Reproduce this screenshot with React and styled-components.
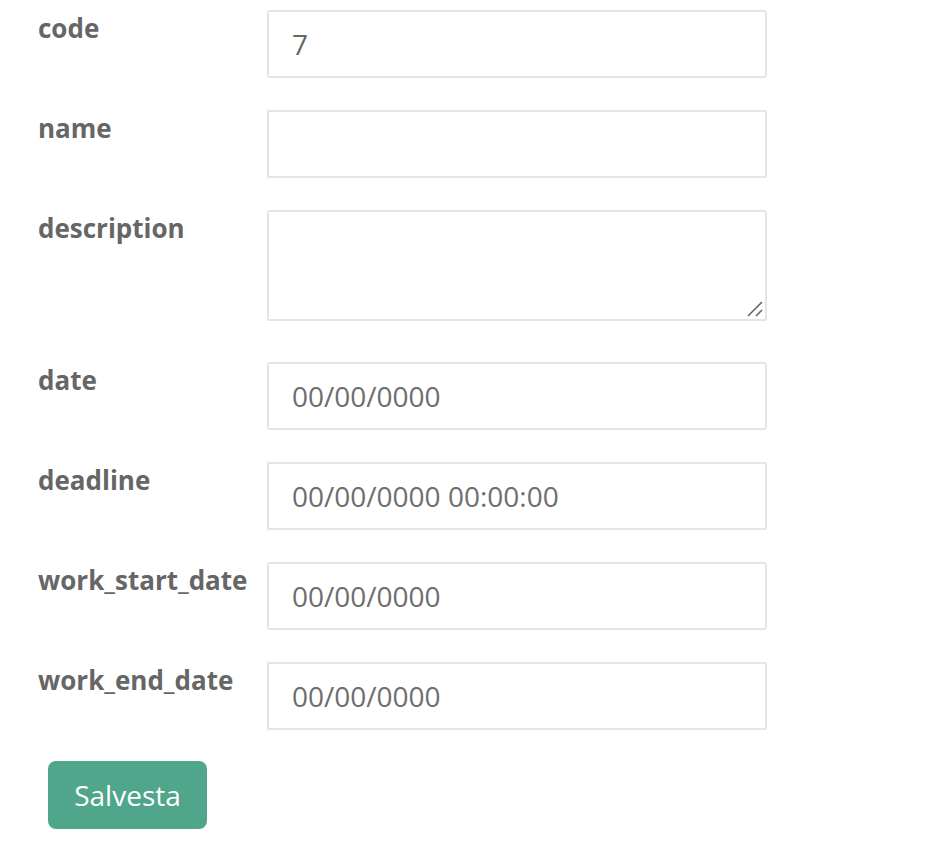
import React from "react";
import styled, { createGlobalStyle } from "styled-components";

const Global = createGlobalStyle`
  html, body { margin: 0; padding: 0; background: #fff; }
  body { font-family: "Open Sans", "Liberation Sans", sans-serif; }
  * { box-sizing: border-box; }
`;

const Form = styled.form`
  display: flex;
  flex-direction: column;
  padding: 10px 0 0 38px;
`;

const Row = styled.div`
  display: flex;
  align-items: flex-start;
  margin-bottom: ${(p) => (p.$tall ? "41px" : "32px")};
`;

const Label = styled.label`
  width: 229px;
  flex: none;
  font-size: 26px;
  line-height: 36px;
  font-weight: 700;
  color: #666;
`;

const Input = styled.input`
  width: 500px;
  height: 68px;
  border: 2px solid #e4e4e4;
  border-radius: 2px;
  padding: 0 23px;
  font-family: "Open Sans", "Liberation Sans", sans-serif;
  font-size: 28px;
  color: #666;
  background: #fff;
  outline: none;
  &::placeholder { color: #6e6e6e; opacity: 1; }
`;

const AreaWrap = styled.div`
  position: relative;
  width: 500px;
  height: 111px;
`;

const TextArea = styled.textarea`
  width: 500px;
  height: 111px;
  border: 2px solid #e4e4e4;
  border-radius: 2px;
  padding: 12px 23px;
  font-family: "Open Sans", "Liberation Sans", sans-serif;
  font-size: 28px;
  color: #666;
  background: #fff;
  outline: none;
  display: block;
  resize: none;
`;

const Grip = styled.svg`
  position: absolute;
  right: 3px;
  bottom: 3px;
  width: 18px;
  height: 18px;
  pointer-events: none;
`;

const Button = styled.button`
  margin: -1px 0 0 10px;
  align-self: flex-start;
  width: 159px;
  height: 68px;
  border: none;
  border-radius: 8px;
  background: #4fa68a;
  color: #fff;
  font-family: "Open Sans", "Liberation Sans", sans-serif;
  font-size: 28px;
  font-weight: 400;
  cursor: pointer;
`;

const fields = [
  { name: "code", value: "7" },
  { name: "name", value: "" },
  { name: "description", area: true },
  { name: "date", placeholder: "00/00/0000" },
  { name: "deadline", placeholder: "00/00/0000 00:00:00" },
  { name: "work_start_date", placeholder: "00/00/0000" },
  { name: "work_end_date", placeholder: "00/00/0000" },
];

export default function App() {
  return (
    <>
      <Global />
      <Form onSubmit={(e) => e.preventDefault()}>
        {fields.map((f) => (
          <Row key={f.name} $tall={f.area}>
            <Label htmlFor={f.name}>{f.name}</Label>
            {f.area ? (
              <AreaWrap>
                <TextArea id={f.name} />
                <Grip viewBox="0 0 18 18">
                  <path d="M2 16 L16 2 M10 16 L16 10" stroke="#666" strokeWidth="1.6" />
                </Grip>
              </AreaWrap>
            ) : (
              <Input
                id={f.name}
                defaultValue={f.value}
                placeholder={f.placeholder}
              />
            )}
          </Row>
        ))}
        <Button type="submit">Salvesta</Button>
      </Form>
    </>
  );
}
